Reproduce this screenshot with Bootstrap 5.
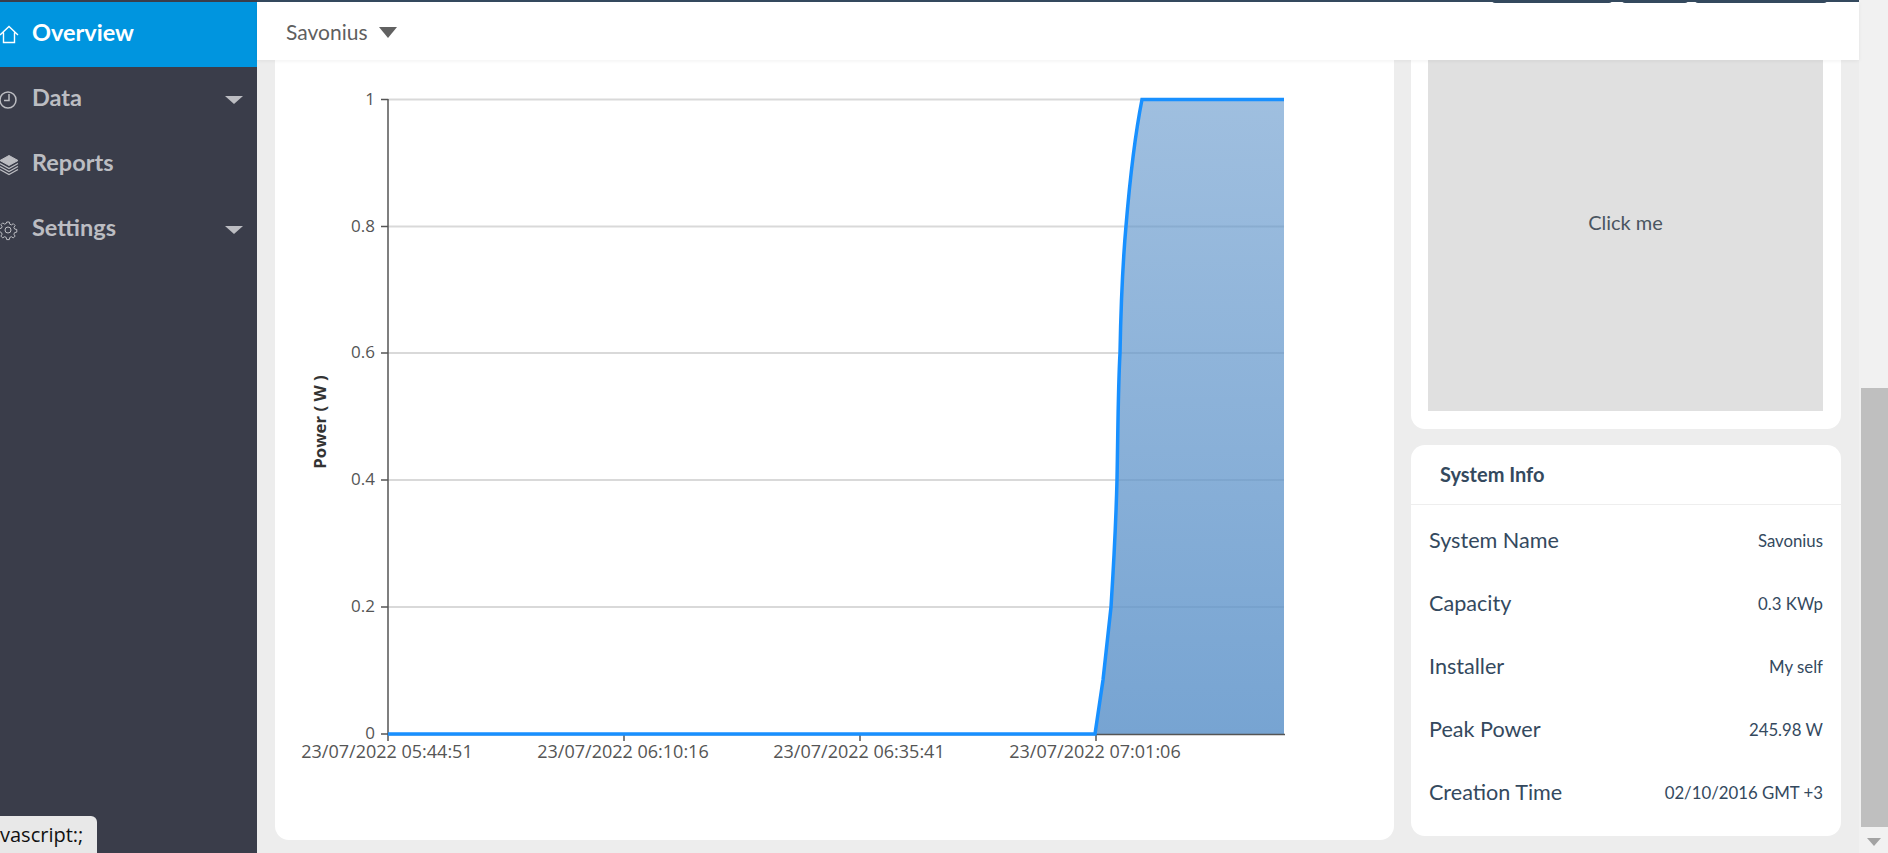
<!DOCTYPE html>
<html lang="en">
<head>
  <meta charset="UTF-8" />
  <title>Savonius - Overview</title>
  <meta name="viewport" content="width=device-width, initial-scale=1" />
  <link href="https://cdn.jsdelivr.net/npm/bootstrap@5.3.0/dist/css/bootstrap.min.css" rel="stylesheet" />
  <style>
    html, body {
      height: 100%;
      overflow: hidden;
    }

    body {
      background-color: #ededed;
      color: #34495e;
      font-family: Lato, sans-serif;
    }

    .side-menu {
      width: 257px;
      background-color: #3a3d4a;
      padding-top: 2px;
    }

    .side-item {
      height: 65px;
      color: #bcbdc2;
      font-size: 23.5px;
      font-weight: 700;
      text-decoration: none;
    }

    .side-item.is-active {
      background-color: #0095df;
      color: #fff;
    }

    .side-text {
      margin-bottom: 3px;
    }

    .side-icon {
      width: 32px;
      height: 32px;
      flex: none;
    }

    .side-caret {
      width: 0;
      height: 0;
      margin-left: auto;
      margin-right: 14px;
      border-left: 9px solid transparent;
      border-right: 9px solid transparent;
      border-top: 8px solid #bcbdc2;
    }

    .main-col {
      min-width: 0;
    }

    .top-strip {
      height: 2px;
      background-color: #34495e;
      padding-right: 32px;
      position: relative;
      z-index: 6;
    }

    .top-strip span {
      height: 3px;
      background-color: #34495e;
      border-radius: 0 0 3px 3px;
    }

    .page-head {
      height: 58px;
      background-color: #fff;
      padding-left: 29px;
      font-size: 21px;
      color: #5f5f5f;
      position: relative;
      z-index: 5;
      box-shadow: 0 1px 4px rgba(0, 0, 0, 0.06);
    }

    .head-text {
      margin-top: 1px;
    }

    .head-caret {
      width: 0;
      height: 0;
      margin-left: 12px;
      margin-top: 3px;
      border-left: 9px solid transparent;
      border-right: 9px solid transparent;
      border-top: 11px solid #616161;
    }

    .page-body {
      margin-top: -43px;
      padding: 0 18px;
      gap: 17px;
    }

    .panel-box {
      background-color: #fff;
      border-radius: 14px;
    }

    .chart-box {
      height: 823px;
      overflow: hidden;
    }

    .chart-box svg {
      display: block;
    }

    .chart-label {
      font-family: "Open Sans", sans-serif;
      font-size: 17px;
      fill: #555;
    }

    .chart-date {
      font-size: 18px;
    }

    .chart-title {
      font-family: "Open Sans", sans-serif;
      font-size: 16.8px;
      font-weight: 700;
      fill: #333;
    }

    .side-col {
      width: 430px;
      flex: none;
      gap: 16px;
    }

    .click-box {
      padding: 17px 18px 18px 17px;
    }

    .click-area {
      height: 377px;
      padding-bottom: 2px;
      background-color: #e0e0e0;
      font-size: 20px;
      color: #4a5560;
    }

    .info-head {
      height: 60px;
      padding-left: 29px;
      padding-bottom: 2px;
      font-size: 20px;
      font-weight: 700;
      border-bottom: 1px solid #eee;
    }

    .info-list {
      padding: 4px 18px 12px;
    }

    .info-row {
      height: 63px;
      font-size: 21.6px;
    }

    .info-row span:last-child {
      font-size: 16.8px;
    }

    .fake-scroll {
      width: 29px;
      background-color: #f1f1f1;
      padding-top: 388px;
    }

    .fake-thumb {
      height: 439px;
      margin-left: 2px;
      background-color: #bfbfbf;
    }

    .fake-arrow {
      width: 0;
      height: 0;
      margin: 11px 0 0 8px;
      border-left: 7.5px solid transparent;
      border-right: 7.5px solid transparent;
      border-top: 8px solid #a3a3a3;
    }

    .link-tip {
      position: fixed;
      left: 0;
      bottom: 0;
      width: 97px;
      height: 37px;
      padding: 4px 0 0 0;
      background-color: #e8e8e8;
      border-top-right-radius: 6px;
      color: #111;
      font-family: "Open Sans", sans-serif;
      font-size: 20px;
      line-height: 1.5;
      z-index: 10;
    }
  </style>
</head>
<body class="d-flex">
  <nav class="side-menu flex-shrink-0">
    <a class="side-item is-active d-flex align-items-center" href="#">
      <svg class="side-icon" viewBox="0 0 32 32" fill="none" stroke="currentColor" stroke-width="1.4">
        <path d="M0 16 9 7.500l9 8.500M3.500 13.500v10h11v-10" />
      </svg>
      <span class="side-text">Overview</span>
    </a>
    <a class="side-item d-flex align-items-center" href="#">
      <svg class="side-icon" viewBox="0 0 32 32" fill="none" stroke="currentColor" stroke-width="1.5">
        <circle cx="8" cy="16" r="8" />
        <path d="M9 10v6.500H4" />
      </svg>
      <span class="side-text">Data</span>
      <span class="side-caret"></span>
    </a>
    <a class="side-item d-flex align-items-center" href="#">
      <svg class="side-icon" viewBox="0 0 32 32" fill="none" stroke="currentColor">
        <path d="M9 6.500 18 11.500 9 16.500 0 11.500Z" fill="currentColor" />
        <path d="M0 14.500l9 5 9-5M0 17.500l9 5 9-5M0 20.500l9 5 9-5" stroke-width="1.300" />
      </svg>
      <span class="side-text">Reports</span>
    </a>
    <a class="side-item d-flex align-items-center" href="#">
      <svg class="side-icon" viewBox="0 0 32 32" fill="none" stroke="currentColor" stroke-width="1">
        <circle cx="8" cy="16" r="3" />
        <path d="M6.700 8h2.600l.5 2.200 1.600.7 1.900-1.200 1.800 1.800-1.200 1.900.7 1.600 2.200.5v2.600l-2.200.5-.7 1.600 1.200 1.900-1.800 1.800-1.900-1.200-1.600.7-.5 2.200H6.700l-.5-2.200-1.600-.7-1.900 1.200-1.800-1.800 1.200-1.900-.7-1.600L-.800 17.300v-2.600l2.200-.5.700-1.600-1.200-1.900 1.800-1.800 1.900 1.200 1.600-.7Z" />
      </svg>
      <span class="side-text">Settings</span>
      <span class="side-caret"></span>
    </a>
  </nav>

  <div class="main-col flex-grow-1 d-flex flex-column">
    <div class="top-strip d-flex justify-content-end">
      <span style="width: 120px; margin-right: 10px"></span>
      <span style="width: 66px; margin-right: 7px"></span>
      <span style="width: 132px"></span>
    </div>
    <header class="page-head d-flex align-items-center">
      <span class="head-text">Savonius</span>
      <span class="head-caret"></span>
    </header>

    <main class="page-body d-flex align-items-start">
      <section class="panel-box chart-box flex-grow-1">
        <svg width="1119" height="823" viewBox="275 17 1119 823">
          <defs>
            <linearGradient id="powerFill" x1="0" y1="0" x2="0" y2="1">
              <stop offset="0" stop-color="#5f94ca" stop-opacity="0.6" />
              <stop offset="1" stop-color="#5f94ca" stop-opacity="0.85" />
            </linearGradient>
          </defs>

          <g stroke="#d9d9d9" stroke-width="2">
            <path d="M388 99.500H1284M388 226.500H1284M388 353H1284M388 480H1284M388 607H1284" />
          </g>

          <path d="M1095 734L1103 680L1111 607C1114 560 1116 520 1117 480C1118 430 1118 390 1120 353C1121 300 1123 260 1126 226C1129 190 1135 135 1142 99.500H1284V734Z" fill="url(#powerFill)" />

          <g stroke="#555" stroke-width="1.500" fill="none">
            <path d="M388 99V741M388 734.500H1285" />
            <path d="M381 99.500H388M381 226.500H388M381 353H388M381 480H388M381 607H388M381 734H388" />
            <path d="M624 734V741M860 734V741M1096 734V741" />
          </g>

          <path d="M388 734H1095L1103 680L1111 607C1114 560 1116 520 1117 480C1118 430 1118 390 1120 353C1121 300 1123 260 1126 226C1129 190 1135 135 1142 99.500H1284" fill="none" stroke="#1890ff" stroke-width="3.500" />

          <g class="chart-label" text-anchor="end">
            <text x="375" y="105">1</text>
            <text x="375" y="232">0.8</text>
            <text x="375" y="358">0.6</text>
            <text x="375" y="485">0.4</text>
            <text x="375" y="612">0.2</text>
            <text x="375" y="739">0</text>
          </g>
          <g class="chart-label chart-date" text-anchor="middle">
            <text x="387" y="758">23/07/2022 05:44:51</text>
            <text x="623" y="758">23/07/2022 06:10:16</text>
            <text x="859" y="758">23/07/2022 06:35:41</text>
            <text x="1095" y="758">23/07/2022 07:01:06</text>
          </g>
          <text class="chart-title" transform="translate(326 422) rotate(-90)" text-anchor="middle">Power ( W )</text>
        </svg>
      </section>

      <aside class="side-col d-flex flex-column">
        <section class="panel-box click-box">
          <div class="click-area d-flex align-items-center justify-content-center">Click me</div>
        </section>
        <section class="panel-box">
          <div class="info-head d-flex align-items-center">System Info</div>
          <div class="info-list">
            <div class="info-row d-flex align-items-center justify-content-between"><span>System Name</span><span>Savonius</span></div>
            <div class="info-row d-flex align-items-center justify-content-between"><span>Capacity</span><span>0.3 KWp</span></div>
            <div class="info-row d-flex align-items-center justify-content-between"><span>Installer</span><span>My self</span></div>
            <div class="info-row d-flex align-items-center justify-content-between"><span>Peak Power</span><span>245.98 W</span></div>
            <div class="info-row d-flex align-items-center justify-content-between"><span>Creation Time</span><span>02/10/2016 GMT +3</span></div>
          </div>
        </section>
      </aside>
    </main>
  </div>

  <div class="fake-scroll flex-shrink-0">
    <div class="fake-thumb"></div>
    <div class="fake-arrow"></div>
  </div>

  <div class="link-tip">vascript:;</div>

  <script src="https://cdn.jsdelivr.net/npm/bootstrap@5.3.0/dist/js/bootstrap.bundle.min.js"></script>
</body>
</html>
